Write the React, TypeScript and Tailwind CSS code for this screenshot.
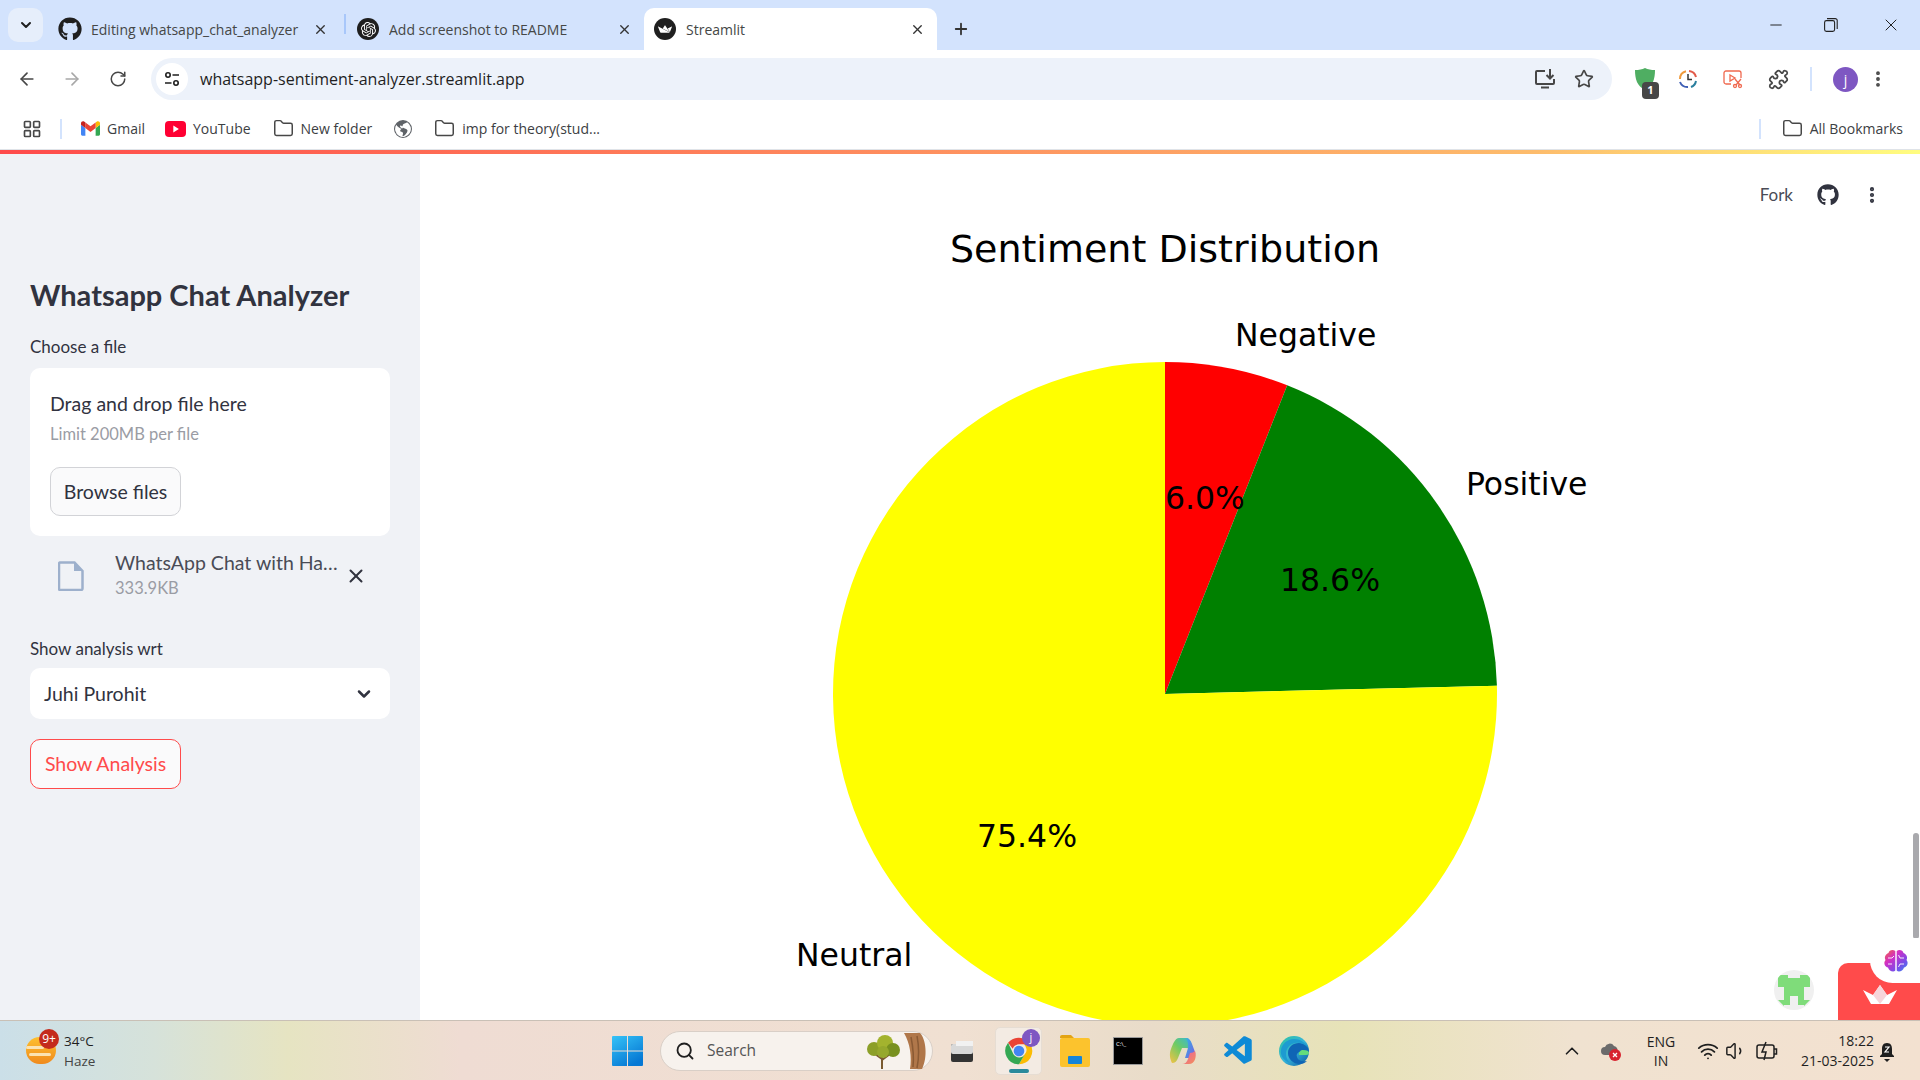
import {
  ArrowLeft,
  ArrowRight,
  ChevronDown,
  ChevronUp,
  EllipsisVertical,
  Folder,
  LayoutGrid,
  Minus,
  Plus,
  Puzzle,
  RotateCw,
  Search,
  Star,
  Volume1,
  Wifi,
  X,
} from 'lucide-react';
import { FaGithub } from 'react-icons/fa';
import { SiOpenai, SiStreamlit } from 'react-icons/si';
import { VscVscode } from 'react-icons/vsc';
import { BsGlobeAmericas } from 'react-icons/bs';

const Tab = ({
  icon,
  title,
  active,
  width,
}: {
  icon: React.ReactNode;
  title: string;
  active?: boolean;
  width: string;
}) => (
  <div
    className={`flex h-[42px] items-center shrink-0 pl-[10px] pr-[12px] ${width} ${
      active ? 'bg-white rounded-t-[10px]' : ''
    }`}
  >
    <span className="flex w-[22px] h-[22px] items-center justify-center rounded-full bg-[#1f1f1f] text-white shrink-0 overflow-hidden">
      {icon}
    </span>
    <span className="ml-[10px] flex-1 truncate text-[14px] text-[#454746]">{title}</span>
    <X size={15} strokeWidth={2.2} className="text-[#333] shrink-0" />
  </div>
);

const Bookmark = ({ icon, label, className }: { icon: React.ReactNode; label?: string; className?: string }) => (
  <div className={`flex items-center gap-[7px] text-[14px] text-[#3c4043] ${className ?? ''}`}>
    {icon}
    {label && <span>{label}</span>}
  </div>
);

const GmailIcon = () => (
  <svg width="19" height="15" viewBox="0 0 24 18">
    <path d="M1.6 18H5.5V8.5L0 4.4V16.4C0 17.3.7 18 1.6 18Z" fill="#4285F4" />
    <path d="M18.5 18h3.9c.9 0 1.6-.7 1.6-1.6v-12l-5.5 4.1Z" fill="#34A853" />
    <path d="M18.5 1.4v7.1L24 4.4V2.2c0-2-2.3-3.2-3.9-2Z" fill="#FBBC04" />
    <path d="M5.5 8.5V1.4L12 6.3l6.5-4.9v7.1L12 13.4Z" fill="#EA4335" />
    <path d="M0 2.2v2.2l5.5 4.1V1.4L3.9.2C2.3-1 0 .2 0 2.2Z" fill="#C5221F" />
  </svg>
);

const YoutubeIcon = () => (
  <svg width="21" height="16" viewBox="0 0 21 16">
    <rect width="21" height="16" rx="4" fill="#ff0033" />
    <path d="M8.3 4.6v6.8l5.6-3.4z" fill="#fff" />
  </svg>
);

const ChromeColorIcon = () => (
  <svg width="32" height="32" viewBox="0 0 48 48">
    <path d="M24 4a20 20 0 0 1 17.3 10H24a10 10 0 0 0-9.4 6.5L7.6 11.8A20 20 0 0 1 24 4Z" fill="#EA4335" />
    <path d="M41.3 14A20 20 0 0 1 24 44l8.7-15A10 10 0 0 0 31 14Z" fill="#FBBC04" />
    <path d="M24 44A20 20 0 0 1 7.6 11.8l8.1 17.1A10 10 0 0 0 32.7 29L24 44Z" fill="#34A853" />
    <circle cx="24" cy="24" r="8" fill="#4285F4" />
  </svg>
);

const WindowsLogo = () => (
  <svg width="31" height="30" viewBox="0 0 31 30">
    <defs>
      <linearGradient id="win" x1="0" y1="0" x2="0.6" y2="1">
        <stop offset="0" stopColor="#36c3f7" />
        <stop offset="1" stopColor="#0678d4" />
      </linearGradient>
    </defs>
    <path d="M0 1a1 1 0 0 1 1-1h14v14.5H0ZM16 0h14a1 1 0 0 1 1 1v13.500H16ZM0 15.500h15V30H1a1 1 0 0 1-1-1ZM16 15.500h15V29a1 1 0 0 1-1 1H16Z" fill="url(#win)" />
  </svg>
);

const TreeIcon = () => (
  <svg width="66" height="36" viewBox="0 0 66 36">
    <path d="M40 0h16c6 6 8 24 2 36H46c2-12 0-26-6-36Z" fill="#b0774a" />
    <path d="M47 4c2 10 3 20 2 30M53 3c2 10 2 22 0 32" stroke="#8a5a34" strokeWidth="1.500" fill="none" />
    <path d="M18 36V22M18 26l-7-5M18 27l8-6" stroke="#7a5a30" strokeWidth="2" fill="none" />
    <circle cx="10" cy="16" r="7" fill="#8c9f28" />
    <circle cx="21" cy="10" r="8" fill="#a3b32e" />
    <circle cx="29" cy="17" r="7" fill="#78901f" />
    <circle cx="19" cy="19" r="6" fill="#96a82c" />
  </svg>
);

const EdgeIcon = () => (
  <svg width="32" height="32" viewBox="0 0 32 32">
    <defs>
      <linearGradient id="edge" x1="0" y1="0" x2="1" y2="1">
        <stop offset="0" stopColor="#2fc4a0" />
        <stop offset="0.5" stopColor="#36b4d8" />
        <stop offset="1" stopColor="#0c59a4" />
      </linearGradient>
    </defs>
    <circle cx="16" cy="16" r="15" fill="url(#edge)" />
    <path d="M31 17c0-6-5-9-10-9-6 0-11 4-11 10 0 6 5 11 12 11 3 0 5-1 7-3-4 1-9 0-10-4-1-2 0-4 2-5h10Z" fill="#0f65b5" />
    <path d="M31 18c0 1-1 2-3 2h-7c-1-3 2-5 4-5 4 0 6 1 6 3Z" fill="#64dc7b" />
    <path d="M16 4c6 0 11 3 14 9-3-4-8-6-13-5-5 1-9 5-9 11 0 4 2 7 4 9C6 26 2 21 3 15 4 9 9 4 16 4Z" fill="#1d9bd1" />
  </svg>
);

const CopilotIcon = () => (
  <svg width="30" height="30" viewBox="0 0 30 30">
    <defs>
      <linearGradient id="cp1" x1="0" y1="0" x2="1" y2="1">
        <stop offset="0" stopColor="#2fb4e8" />
        <stop offset="1" stopColor="#7c5ce0" />
      </linearGradient>
      <linearGradient id="cp2" x1="0" y1="1" x2="1" y2="0">
        <stop offset="0" stopColor="#f6c244" />
        <stop offset="0.5" stopColor="#6ecb63" />
        <stop offset="1" stopColor="#2fb4e8" />
      </linearGradient>
      <linearGradient id="cp3" x1="0" y1="0" x2="1" y2="1">
        <stop offset="0" stopColor="#e85ca8" />
        <stop offset="1" stopColor="#f49057" />
      </linearGradient>
    </defs>
    <path d="M11 2h7c3 0 4 2 5 5l3 9c-2-3-5-4-8-4h-4l-4 10c-1 3-3 5-6 5C2 23 1 18 3 13 5 8 7 2 11 2Z" fill="url(#cp2)" />
    <path d="M18 2c3 0 5 3 6 6l3 8c1 4-2 6-5 6h-5l3-10c.5-3 0-7-2-10Z" fill="url(#cp1)" />
    <path d="M14 28c3 0 5-2 6-5l2-6c2 0 4-1 5-2 2 5 0 13-6 13Z" fill="url(#cp3)" />
  </svg>
);

const PieChart = () => (
  <svg viewBox="420 154 1500 866" className="block w-full h-full" fontFamily="'DejaVu Sans', sans-serif" fill="#000">
    <path d="M1165 694 L1165 362 A332 332 0 0 1 1287.200 385.300 Z" fill="#ff0000" />
    <path d="M1165 694 L1287.200 385.300 A332 332 0 0 1 1496.900 685.700 Z" fill="#008000" />
    <path d="M1165 694 L1496.900 685.700 A332 332 0 1 1 1165 362 Z" fill="#ffff00" />
    <text x="1165" y="262" fontSize="38" textAnchor="middle">Sentiment Distribution</text>
    <text x="1235" y="346" fontSize="31.500">Negative</text>
    <text x="1466" y="495" fontSize="31.500">Positive</text>
    <text x="796" y="966" fontSize="31.500">Neutral</text>
    <text x="1165" y="509" fontSize="31.500">6.0%</text>
    <text x="1280" y="591" fontSize="31.500">18.6%</text>
    <text x="977" y="847" fontSize="31.500">75.4%</text>
  </svg>
);

const Sidebar = () => (
  <aside className="w-[420px] h-full shrink-0 bg-[#f0f2f6] px-[30px] pt-[121px] text-[#31333f] font-['Lato',sans-serif]">
    <h2 className="h-10 leading-10 text-[29px] font-bold text-[#31333f]">Whatsapp Chat Analyzer</h2>
    <div className="mt-[22px] h-[20px] leading-5 text-[17px]">Choose a file</div>
    <div className="mt-[11px] h-[168px] rounded-[10px] bg-white px-5 pt-6">
      <div className="h-6 leading-6 text-[19.500px]">Drag and drop file here</div>
      <div className="mt-2 h-5 leading-5 text-[16.500px] text-[#9a9ca4]">Limit 200MB per file</div>
      <button className="mt-[23px] h-[49px] w-[131px] rounded-[10px] border border-[#d2d3d7] bg-[#fafafb] text-[19.500px]">
        Browse files
      </button>
    </div>
    <div className="flex h-[80px] items-center pl-[28px]">
      <svg width="26" height="30" viewBox="0 0 26 30" className="shrink-0">
        <path
          d="M2 1.500h14.500l8 8.500v17.500a1.500 1.500 0 0 1-1.500 1.500H2.500a1.500 1.500 0 0 1-1.500-1.500V3a1.500 1.500 0 0 1 1-1.500Z"
          fill="#f0f2f6"
          stroke="#9db0cc"
          strokeWidth="2.500"
        />
        <path d="M16 1.500v8.500h8.500Z" fill="#9db0cc" />
      </svg>
      <div className="ml-[31px] w-[226px] -mt-[3px]">
        <div className="truncate text-[19.500px] leading-[26px] text-[#4a4c56]">WhatsApp Chat with Han...</div>
        <div className="text-[16.500px] leading-[24px] text-[#9a9ca4]">333.9KB</div>
      </div>
      <X size={22} strokeWidth={2.2} className="ml-[4px] text-[#31333f]" />
    </div>
    <div className="mt-[23px] h-[20px] leading-5 text-[17px]">Show analysis wrt</div>
    <div className="mt-[9px] flex h-[51px] items-center justify-between rounded-[10px] bg-white pl-[14px] pr-4 text-[19.500px]">
      <span>Juhi Purohit</span>
      <ChevronDown size={20} strokeWidth={3} />
    </div>
    <button className="mt-5 h-[50px] w-[151px] rounded-[10px] border border-[#ff4b4b] bg-[#fafafb] text-[19.500px] text-[#ff4b4b]">
      Show Analysis
    </button>
  </aside>
);

export default function App() {
  return (
    <div className="relative flex h-[1080px] w-[1920px] flex-col overflow-hidden bg-white font-['Open_Sans',sans-serif]">
      {/* chrome tabs */}
      <div className="flex h-[50px] shrink-0 items-end bg-[#d3e3fd] pl-2">
        <div className="mb-2 flex h-[34px] w-[35px] shrink-0 items-center justify-center rounded-[10px] bg-[#e6eefb]">
          <ChevronDown size={16} strokeWidth={3} className="text-[#1f1f1f]" />
        </div>
        <div className="ml-[16px] w-[285px] shrink-0">
          <div className="flex h-[42px] items-center">
            <FaGithub size={24} className="-ml-[1px] shrink-0 text-[#1f1f1f]" />
            <span className="ml-[9px] w-[208px] overflow-hidden whitespace-nowrap text-[14px] text-[#454746]">
              Editing whatsapp_chat_analyzer
            </span>
            <X size={15} strokeWidth={2.2} className="ml-[14px] shrink-0 text-[#333]" />
          </div>
        </div>
        <div className="mb-[16px] h-5 w-[2px] shrink-0 bg-[#a8c7fa]" />
        <Tab
          width="w-[298px] pl-[11px] pr-[10px]"
          title="Add screenshot to README"
          icon={<SiOpenai size={15} />}
        />
        <Tab active width="w-[293px]" title="Streamlit" icon={<SiStreamlit size={14} />} />
        <Plus size={18} strokeWidth={2.4} className="mb-[12px] ml-[15px] text-[#333]" />
        <div className="ml-auto flex h-full items-center">
          <Minus size={18} strokeWidth={1.3} className="mr-[39px] text-[#222]" />
          <svg width="14" height="14" viewBox="0 0 14 14" fill="none" stroke="#222" strokeWidth="1.100" className="mr-[43px]">
            <rect x="0.600" y="2.600" width="10" height="10.800" rx="1.800" />
            <path d="M3 .6h8.200a2 2 0 0 1 2 2V11" />
          </svg>
          <X size={20} strokeWidth={1.2} className="mr-[19px] text-[#222]" />
        </div>
      </div>

      {/* address bar */}
      <div className="flex h-[58px] shrink-0 items-center rounded-t-[10px] bg-white pb-[0px]">
        <ArrowLeft size={20} strokeWidth={2} className="ml-[17px] text-[#474747]" />
        <ArrowRight size={20} strokeWidth={2} className="ml-[25px] text-[#a8a8a8]" />
        <RotateCw size={18} strokeWidth={2} className="ml-[27px] text-[#474747]" />
        <div className="ml-[24px] flex h-[42px] w-[1461px] items-center rounded-full bg-[#edf2fa] pl-[5px] pr-[18px]">
          <span className="flex h-8 w-8 items-center justify-center rounded-full bg-white">
            <svg width="16" height="16" viewBox="0 0 16 16" fill="none" stroke="#1f1f1f" strokeWidth="1.600">
              <circle cx="4" cy="4" r="2.200" />
              <path d="M8.500 4H15M1 12h6.500" />
              <circle cx="12" cy="12" r="2.200" />
            </svg>
          </span>
          <span className="ml-[12px] text-[16px] text-[#1f1f1f]">whatsapp-sentiment-analyzer.streamlit.app</span>
          <svg width="22" height="22" viewBox="0 0 22 22" fill="none" stroke="#474747" strokeWidth="2" className="ml-auto">
            <path d="M11 3H3a1 1 0 0 0-1 1v11a1 1 0 0 0 1 1h16a1 1 0 0 0 1-1v-4" />
            <path d="M16 1v9M12.500 7l3.500 3.500L19.500 7M7 19.500h8" />
          </svg>
          <Star size={20} strokeWidth={2} className="ml-[18px] text-[#474747]" />
        </div>
        {/* extensions */}
        <span className="relative ml-[21px] flex h-6 w-6 items-center justify-center">
          <svg width="22" height="24" viewBox="0 0 22 24">
            <path d="M11 1c3 1.500 6 2 10 2 0 9-2 16-10 20C3 19 1 12 1 3c4 0 7-.5 10-2Z" fill="#4fae62" />
          </svg>
          <span className="absolute -bottom-[8px] left-[9px] flex h-[17px] w-[17px] items-center justify-center rounded-[4px] bg-[#474747] text-[11px] font-bold text-white">
            1
          </span>
        </span>
        <svg width="20" height="20" viewBox="0 0 20 20" fill="none" strokeWidth="2" className="ml-[21px]">
          <path d="M2 10a8 8 0 0 1 6-7.700" stroke="#ef9a3c" />
          <path d="M11 2a8 8 0 0 1 7 6" stroke="#e25b4a" />
          <path d="M18 12a8 8 0 0 1-5 6" stroke="#2b7f9e" />
          <path d="M10 18a8 8 0 0 1-8-5" stroke="#3f5fb5" />
          <path d="M10 5v5.500h4" stroke="#333" strokeWidth="1.500" />
        </svg>
        <svg width="20" height="20" viewBox="0 0 20 20" fill="none" stroke="#f0694f" strokeWidth="1.300" className="ml-[25px]">
          <path d="M8 15H3a2 2 0 0 1-2-2V4a2 2 0 0 1 2-2h13a2 2 0 0 1 2 2v5" />
          <path d="M7 6l5 3-5 3z" />
          <circle cx="12" cy="17" r="1.500" />
          <circle cx="17" cy="17" r="1.500" />
          <path d="M12 10l5 6M18 10l-5 6" />
        </svg>
        <Puzzle size={21} strokeWidth={2} className="ml-[25px] text-[#474747]" />
        <div className="ml-[21px] h-6 w-[2px] bg-[#d3e3fd]" />
        <span className="ml-[21px] flex h-[25px] w-[25px] items-center justify-center rounded-full bg-[#7e57c2] text-[14px] text-white">
          j
        </span>
        <EllipsisVertical size={20} strokeWidth={2.6} className="ml-[10px] text-[#474747]" />
      </div>

      {/* bookmarks */}
      <div className="flex h-[42px] shrink-0 items-center border-b border-[#dfe3e8] bg-white pb-[0px]">
        <LayoutGrid size={20} strokeWidth={2} className="ml-[22px] text-[#474747]" />
        <div className="ml-[18px] h-5 w-[2px] bg-[#d3e3fd]" />
        <Bookmark className="ml-[19px]" icon={<GmailIcon />} label="Gmail" />
        <Bookmark className="ml-[20px]" icon={<YoutubeIcon />} label="YouTube" />
        <Bookmark className="ml-[22px]" icon={<Folder size={21} strokeWidth={1.7} className="text-[#474747]" />} label="New folder" />
        <Bookmark className="ml-[22px]" icon={<BsGlobeAmericas size={18} className="text-[#5f6368]" />} />
        <Bookmark className="ml-[22px]" icon={<Folder size={21} strokeWidth={1.7} className="text-[#474747]" />} label="imp for theory(stud..." />
        <div className="ml-auto h-5 w-[2px] bg-[#d3e3fd]" />
        <Bookmark className="ml-[21px] mr-[17px]" icon={<Folder size={21} strokeWidth={1.7} className="text-[#474747]" />} label="All Bookmarks" />
      </div>
      <div className="h-[4px] shrink-0 bg-[linear-gradient(to_right,#ff4b4b,#fdbc6c_80%,#fffd80)]" />

      {/* page */}
      <div className="relative flex min-h-0 flex-1">
        <Sidebar />
        <main className="min-w-0 flex-1">
          <PieChart />
        </main>
        <div className="absolute right-[38px] top-[28px] flex items-center text-[#4a4c56]">
          <span className="font-['Lato',sans-serif] text-[17px]">Fork</span>
          <FaGithub size={22} className="ml-[24px] text-[#31333f]" />
          <EllipsisVertical size={20} strokeWidth={3} className="ml-[23px] text-[#31333f]" />
        </div>
        {/* scrollbar + floating badges */}
        <div className="absolute right-[1px] top-[679px] h-[106px] w-[6px] rounded-full bg-[#a9a9ad]" />
        <div className="absolute bottom-0 right-0 h-[57px] w-[82px] rounded-tl-[10px] bg-[#ff4b4b]">
          <svg width="34" height="20" viewBox="0 0 34 20" className="absolute left-[25px] top-[21px]">
            <path d="M0 6l8 14h18L34 6l-10 5-7-10-7 10Z" fill="#fff" />
            <path d="M17 1l7 10-7 9-7-9Z" fill="#f6d5da" />
          </svg>
        </div>
        <div className="absolute bottom-[37px] right-0 flex h-[45px] w-[50px] items-center justify-center rounded-l-full bg-white">
          <svg width="26" height="24" viewBox="0 0 26 24" className="ml-[1px]">
            <defs>
              <linearGradient id="brain" x1="0" y1="0" x2="1" y2="1">
                <stop offset="0" stopColor="#f5663c" />
                <stop offset="0.350" stopColor="#d22fc5" />
                <stop offset="0.700" stopColor="#7a4be8" />
                <stop offset="1" stopColor="#2f8ff0" />
              </linearGradient>
            </defs>
            <path d="M12.300 2C10 0 6 1 5.500 4 2.500 5 1 8.500 2.500 11 0 14 2 18 5 18.500 6 22 10.500 24 12.300 21.500ZM13.700 2C16 0 20 1 20.500 4c3 1 4.500 4.500 3 7 2.500 3 .5 7-2.500 7.500-1 3.500-5.500 5.500-7.300 3Z" fill="url(#brain)" />
            <path d="M5 9h4l2-2M5 15h4M21 9h-4l-1.500-3M21 15h-4l-1.500 3" stroke="#fff" strokeWidth="0.900" fill="none" />
          </svg>
        </div>
        <div className="absolute bottom-[10px] right-[106px] flex h-10 w-10 items-center justify-center overflow-hidden rounded-full bg-[#f0f0f0]">
          <svg width="40" height="40" viewBox="0 0 40 40">
            <path d="M4 5h10v3h12V5h10v12h-6v18h-6v-9h-8v9h-6V17H4Z" fill="#7fdc7a" />
            <path d="M4 30l6 0v6ZM36 30l-6 0v6Z" fill="#7fdc7a" />
          </svg>
        </div>
      </div>

      {/* windows taskbar */}
      <footer className="flex h-[60px] shrink-0 items-center border-t border-[#c9c0b6] bg-[linear-gradient(to_right,#cbdfe8,#d6e2da_8%,#e6e4c2_15%,#efdcd3_24%,#f0e0d2_50%,#e9dcc9_60%,#e7e3b8_70%,#f0e2d0_82%,#f3e1d0)] text-[#1f1f1f]">
        <div className="relative flex w-[596px] shrink-0 items-center pl-[26px]">
          <span className="relative block h-[27px] w-[30px]">
            <span className="absolute inset-0 rounded-full bg-[linear-gradient(to_bottom,#fdc02f,#f08a1d)]" />
            <span className="absolute left-0 top-[9px] h-[3px] w-[18px] rounded bg-[#fbe3b2]" />
            <span className="absolute left-[3px] top-[16px] h-[3px] w-[22px] rounded bg-[#fbe3b2]" />
          </span>
          <span className="absolute left-[39px] -top-[2px] flex h-[20px] w-[20px] items-center justify-center rounded-full bg-[#c42b1c] text-[12px] text-white">
            9+
          </span>
          <div className="ml-[8px] text-[13.500px] leading-[20px]">
            <div>34°C</div>
            <div className="text-[#444]">Haze</div>
          </div>
        </div>
        <div className="flex items-center">
          <span className="ml-[16px]"><WindowsLogo /></span>
          <div className="ml-[17px] flex h-10 w-[273px] items-center rounded-full border border-[#d9cfc7] bg-[#f7f2ed] pl-[14px] pr-[2px]">
            <Search size={20} strokeWidth={2.2} className="text-[#1f1f1f]" />
            <span className="ml-[12px] text-[15.500px] text-[#555]">Search</span>
            <span className="ml-auto"><TreeIcon /></span>
          </div>
          <svg width="26" height="26" viewBox="0 0 26 26" className="ml-[15px]">
            <rect x="3" y="6" width="22" height="18" rx="2" fill="#333" />
            <rect x="3" y="6" width="22" height="10" rx="2" fill="#d8d8d8" />
            <rect x="8" y="3" width="17" height="5" fill="#f1f1f1" />
          </svg>
          <div className="relative ml-[21px] flex h-[48px] w-[47px] items-center justify-center rounded-[5px] border border-[#e6ddd3] bg-[#f3ebe3]">
            <ChromeColorIcon />
            <span className="absolute right-[1px] top-[1px] flex h-[18px] w-[18px] items-center justify-center rounded-full bg-[#7e57c2] text-[11px] text-white">j</span>
            <span className="absolute bottom-[1px] h-[4px] w-[20px] rounded-full bg-[#2a8a9c]" />
          </div>
          <svg width="32" height="34" viewBox="0 0 32 34" className="ml-[17px]">
            <path d="M1 3a2 2 0 0 1 2-2h9l3 3h-14Z" fill="#e3a414" />
            <rect x="1" y="4" width="30" height="29" rx="2" fill="#fcc32d" />
            <rect x="9" y="22" width="14" height="8" rx="1" fill="#1685d8" />
          </svg>
          <span className="ml-[22px] flex h-[28px] w-[30px] items-start border border-[#9a9a9a] bg-black text-[6px] leading-[8px] text-white">
            <span className="mt-[2px] ml-[2px]">C:\_</span>
          </span>
          <span className="ml-[25px]"><CopilotIcon /></span>
          <VscVscode size={34} className="ml-[24px] text-[#0e8ad6]" />
          <span className="ml-[22px]"><EdgeIcon /></span>
        </div>
        <div className="ml-auto flex items-center pr-[24px]">
          <ChevronUp size={22} strokeWidth={1.8} />
          <svg width="22" height="22" viewBox="0 0 22 22" className="ml-[17px]">
            <path d="M5 15a4 4 0 0 1 0-8 5 5 0 0 1 9-1 4 4 0 0 1 3 6v3Z" fill="#6b6b6b" />
            <circle cx="15" cy="15" r="6" fill="#d8232f" />
            <path d="M13 13l4 4M17 13l-4 4" stroke="#fff" strokeWidth="1.300" />
          </svg>
          <div className="ml-[21px] w-[36px] text-center text-[14px] leading-[19px]">
            <div>ENG</div>
            <div>IN</div>
          </div>
          <Wifi size={22} strokeWidth={2} className="ml-[18px]" />
          <Volume1 size={22} strokeWidth={1.6} className="ml-[6px]" />
          <svg width="24" height="22" viewBox="0 0 24 22" fill="none" stroke="#1f1f1f" strokeWidth="1.500" className="ml-[8px]">
            <rect x="2" y="5" width="17" height="13" rx="2" />
            <path d="M19 9h2.500v5H19" />
            <path d="M11 2L7 12h4l-2 8" />
          </svg>
          <div className="ml-[13px] w-[82px] text-right text-[14px] leading-[20px]">
            <div>18:22</div>
            <div>21-03-2025</div>
          </div>
          <svg width="18" height="24" viewBox="0 0 18 24" className="ml-[4px]">
            <path d="M9 4c4 0 5 3 5 6v5l2 2v1H2v-1l2-2v-5c0-3 1-6 5-6Z" fill="#1f1f1f" />
            <path d="M6 20h6l-3 3Z" fill="#1f1f1f" />
            <path d="M7 8h4l-4 5h4" stroke="#fff" strokeWidth="1.200" fill="none" />
          </svg>
        </div>
      </footer>
    </div>
  );
}
